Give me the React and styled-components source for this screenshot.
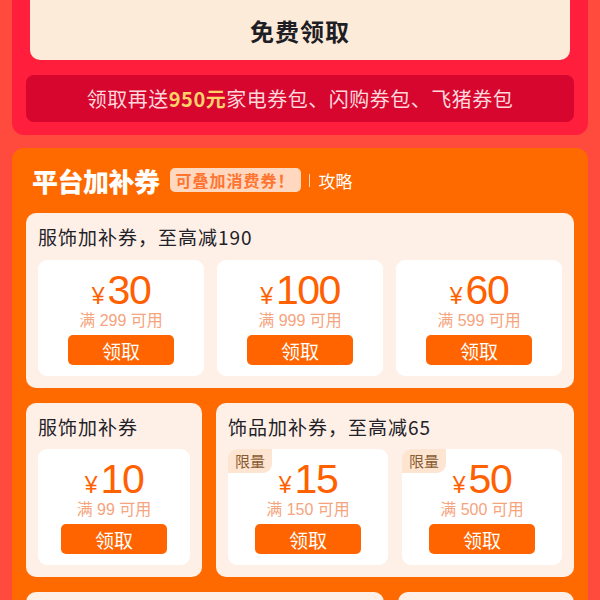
import React from 'react'
import styled, { createGlobalStyle } from 'styled-components'

const GlobalStyle = createGlobalStyle`
	html, body {
		margin: 0;
		padding: 0;
		background: #ff4b3e;
	}
	body {
		font-family: "Noto Sans CJK SC", "Noto Sans", sans-serif;
	}
`

const Page = styled.div`
	width: 600px;
	box-sizing: border-box;
	padding: 0 12px 20px;
	display: flex;
	flex-direction: column;
	gap: 13px;
`

const RedCard = styled.div`
	background: #ff1e3c;
	border-radius: 0 0 12px 12px;
	padding: 0 14px 13px;
	display: flex;
	flex-direction: column;
	gap: 15px;
`

const FreeButton = styled.div`
	margin: 0 4px;
	height: 60px;
	background: #fdebda;
	border-radius: 0 0 10px 10px;
	display: flex;
	align-items: center;
	justify-content: center;
	font-size: 24px;
	font-weight: 700;
	color: #1e1e24;
	letter-spacing: 1px;
`

const Banner = styled.div`
	height: 47px;
	background: #d6062f;
	border-radius: 8px;
	display: flex;
	align-items: center;
	justify-content: center;
	font-size: 20px;
	letter-spacing: 0.5px;
	color: #ffd8db;
`

const Gold = styled.span`
	color: #ffd36a;
	font-weight: 700;
`

const OrangePanel = styled.div`
	background: #ff6a00;
	border-radius: 12px;
	padding: 20px 14px 14px;
	display: flex;
	flex-direction: column;
`

const PanelHead = styled.div`
	height: 24px;
	display: flex;
	align-items: center;
	margin-bottom: 21px;
	padding-left: 6px;
`

const PanelTitle = styled.div`
	font-size: 26px;
	font-weight: 900;
	color: #ffffff;
	margin-right: 10px;
	letter-spacing: -0.5px;
`

const Badge = styled.div`
	height: 24px;
	box-sizing: border-box;
	padding: 0 6px;
	background: #ffd8bf;
	border-radius: 5px;
	font-size: 16px;
	font-weight: 700;
	color: #ff7430;
	display: flex;
	align-items: center;
	letter-spacing: 1px;
`

const Guide = styled.div`
	margin-left: 8px;
	font-size: 17px;
	color: #ffffff;
	display: flex;
	align-items: center;
	gap: 9px;
`

const Bar = styled.span`
	width: 1px;
	height: 13px;
	background: #ffd8bf;
`

const Row = styled.div`
	display: grid;
	grid-template-columns: ${p => p.$cols || '1fr'};
	gap: 14px;
	margin-bottom: 15px;
`

const Card = styled.div`
	background: #fff0e7;
	border-radius: 10px;
	padding: 12px;
	min-height: ${p => p.$minH || 0}px;
	display: flex;
	flex-direction: column;
	gap: ${p => p.$gap || 11}px;
`

const CardTitle = styled.div`
	font-size: 19px;
	line-height: 24px;
	letter-spacing: 1px;
	color: #222228;
	white-space: nowrap;
`

const Coupons = styled.div`
	display: grid;
	grid-template-columns: repeat(${p => p.$n}, 1fr);
	gap: ${p => p.$gap || 13}px;
`

const Coupon = styled.div`
	position: relative;
	height: 116px;
	box-sizing: border-box;
	padding-top: 8px;
	background: #ffffff;
	border-radius: 9px;
	display: flex;
	flex-direction: column;
	align-items: center;
`

const Limit = styled.div`
	position: absolute;
	left: 0;
	top: 0;
	padding: 1px 7px 2px;
	background: #fde5d1;
	border-radius: 9px 0 9px 0;
	font-size: 15px;
	color: #8a5a30;
`

const Price = styled.div`
	height: 44px;
	display: flex;
	align-items: baseline;
	color: #ff6000;
	line-height: 44px;
`

const Yen = styled.span`
	font-family: "Liberation Sans", sans-serif;
	font-size: 23px;
	margin-right: 3px;
`

const Amount = styled.span`
	font-family: "Liberation Sans", sans-serif;
	font-size: 41px;
	letter-spacing: -1.5px;
`

const Cond = styled.div`
	font-size: 16px;
	line-height: 18px;
	color: #f6a47d;
	font-family: "Liberation Sans", "Noto Sans CJK SC", sans-serif;
`

const GetButton = styled.div`
	margin-top: 5px;
	width: 106px;
	height: 30px;
	background: #ff6400;
	border-radius: 5px;
	color: #ffffff;
	font-size: 19px;
	display: flex;
	align-items: center;
	justify-content: center;
`

function CouponBox({ amount, min, limited }) {
	return (
		<Coupon>
			{limited && <Limit>限量</Limit>}
			<Price>
				<Yen>¥</Yen>
				<Amount>{amount}</Amount>
			</Price>
			<Cond>满 {min} 可用</Cond>
			<GetButton>领取</GetButton>
		</Coupon>
	)
}

export default function App() {
	return (
		<>
			<GlobalStyle />
			<Page>
				<RedCard>
					<FreeButton>免费领取</FreeButton>
					<Banner>
						领取再送<Gold>950元</Gold>家电券包、闪购券包、飞猪券包
					</Banner>
				</RedCard>

				<OrangePanel>
					<PanelHead>
						<PanelTitle>平台加补券</PanelTitle>
						<Badge>可叠加消费券！</Badge>
						<Guide>
							<Bar />
							攻略
						</Guide>
					</PanelHead>

					<Row>
						<Card>
							<CardTitle>服饰加补券，至高减190</CardTitle>
							<Coupons $n={3}>
								<CouponBox amount="30" min="299" />
								<CouponBox amount="100" min="999" />
								<CouponBox amount="60" min="599" />
							</Coupons>
						</Card>
					</Row>

					<Row $cols="176px 1fr">
						<Card $gap={10}>
							<CardTitle>服饰加补券</CardTitle>
							<Coupons $n={1}>
								<CouponBox amount="10" min="99" />
							</Coupons>
						</Card>
						<Card $gap={10}>
							<CardTitle>饰品加补券，至高减65</CardTitle>
							<Coupons $n={2} $gap={14}>
								<CouponBox amount="15" min="150" limited />
								<CouponBox amount="50" min="500" limited />
							</Coupons>
						</Card>
					</Row>

					<Row $cols="1fr 176px">
						<Card $minH={150} />
						<Card $minH={150} />
					</Row>
				</OrangePanel>
			</Page>
		</>
	)
}
